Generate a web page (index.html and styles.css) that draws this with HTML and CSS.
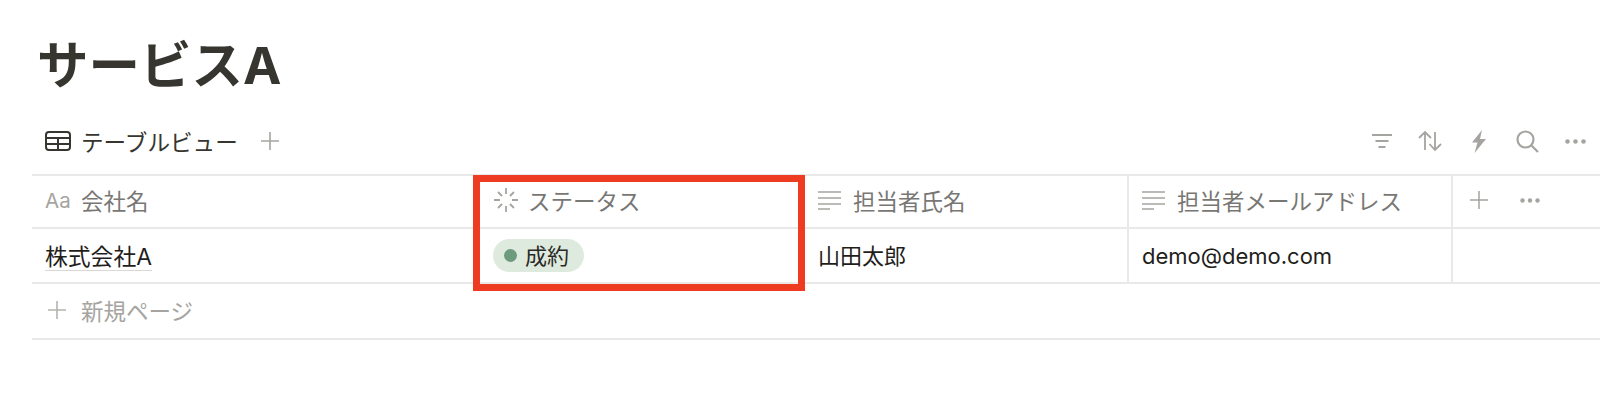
FILE: index.html
```html
<!DOCTYPE html>
<html lang="ja">
<head>
  <meta charset="UTF-8">
  <title>サービスA</title>
  <link rel="stylesheet" href="styles.css">
</head>
<body>
  <div class="page">
    <h1 class="title">サービスA</h1>

    <div class="toolbar">
      <div class="view-tab">
        <svg class="tab-icon" width="26" height="22" viewBox="0 0 26 22" fill="none" stroke="#37352f" stroke-width="2">
          <rect x="1" y="2" width="24" height="18" rx="3"/>
          <path d="M1 8h24M1 14h24M13 8v12"/>
        </svg>
        <span>テーブルビュー</span>
        <svg class="add-view" width="20" height="20" viewBox="0 0 20 20" stroke="#a5a4a0" stroke-width="1.6"><path d="M10 1v18M1 10h18"/></svg>
      </div>
      <div class="tools">
        <svg width="20" height="16" viewBox="0 0 20 16" fill="none" stroke="#a5a4a0" stroke-width="2"><path d="M0 2h20M3.500 8h13M6.500 14h7"/></svg>
        <svg width="24" height="22" viewBox="0 0 24 22" fill="none" stroke="#a5a4a0" stroke-width="1.800"><path d="M7 20V2M1 8l6-6 6 6M17 2v18M11.500 14l5.500 6 6-6"/></svg>
        <svg class="bolt" width="16" height="23" viewBox="0 0 16 23" fill="#a5a4a0"><path d="M11 0 1 12.500h5.500L3.500 23 15 9H9z"/></svg>
        <svg width="23" height="23" viewBox="0 0 23 23" fill="none" stroke="#a5a4a0" stroke-width="2.200"><circle cx="9.500" cy="9.500" r="8"/><path d="M15 15l7 7"/></svg>
        <svg width="21" height="5" viewBox="0 0 21 5" fill="#a5a4a0"><circle cx="2.500" cy="2.500" r="2.300"/><circle cx="10.500" cy="2.500" r="2.300"/><circle cx="18.500" cy="2.500" r="2.300"/></svg>
      </div>
    </div>

    <div class="table">
      <div class="row head">
        <div class="cell col-name"><span class="aa">Aa</span>会社名</div>
        <div class="cell col-status">
          <svg width="26" height="26" viewBox="0 0 26 26" stroke="#a5a4a0" stroke-width="1.800"><path d="M13 1v6M13 19v6M1 13h6M19 13h6M5 5l4 4M17 17l4 4M5 21l4-4M17 9l4-4"/></svg>
          ステータス
        </div>
        <div class="cell col-person">
          <svg class="lines" width="23" height="20" viewBox="0 0 23 20" stroke="#a5a4a0" stroke-width="1.600"><path d="M0 2h23M0 8h23M0 14h23M0 19h12"/></svg>
          担当者氏名
        </div>
        <div class="cell col-mail">
          <svg class="lines" width="23" height="20" viewBox="0 0 23 20" stroke="#a5a4a0" stroke-width="1.600"><path d="M0 2h23M0 8h23M0 14h23M0 19h12"/></svg>
          担当者メールアドレス
        </div>
        <div class="cell col-add">
          <svg width="18" height="18" viewBox="0 0 18 18" stroke="#a5a4a0" stroke-width="1.500"><path d="M9 0v18M0 9h18"/></svg>
          <svg class="more" width="20" height="5" viewBox="0 0 20 5" fill="#a5a4a0"><circle cx="2.500" cy="2.500" r="2.200"/><circle cx="10" cy="2.500" r="2.200"/><circle cx="17.500" cy="2.500" r="2.200"/></svg>
        </div>
      </div>
      <div class="row body">
        <div class="cell col-name"><span class="page-link">株式会社A</span></div>
        <div class="cell col-status"><span class="tag"><i class="dot"></i><span class="tag-text">成約</span></span></div>
        <div class="cell col-person"><span class="person">山田太郎</span></div>
        <div class="cell col-mail">demo@demo.com</div>
        <div class="cell col-add"></div>
      </div>
      <div class="new-page">
        <svg width="20" height="20" viewBox="0 0 20 20" stroke="#b4b3af" stroke-width="1.600"><path d="M10 1v18M1 10h18"/></svg>
        新規ページ
      </div>
      <div class="highlight"></div>
    </div>
  </div>
</body>
</html>
```

FILE: styles.css
```css
* {
  box-sizing: border-box;
}
body {
  margin: 0;
  background-color: #fff;
  font-family: "Inter", "Noto Sans CJK JP", sans-serif;
  color: #37352f;
}

.page {
  padding: 31px 0 0 32px;
}

.title {
  margin: 0 0 0 5px;
  font-size: 51.5px;
  line-height: 68px;
  font-weight: 700;
  color: #37352f;
}

.toolbar {
  display: flex;
  justify-content: space-between;
  align-items: center;
  height: 44px;
  margin-top: 20px;
  padding: 0 14px 0 13px;
}
.view-tab {
  display: flex;
  align-items: center;
  font-size: 22.6px;
  color: #37352f;
}
.tab-icon {
  margin-right: 10px;
}
.add-view {
  margin-left: 22px;
}
.tools {
  display: flex;
  align-items: center;
  gap: 26px;
}
.bolt {
  margin: 0 3px;
}

.table {
  position: relative;
  margin-top: 11px;
  border-top: 2px solid #e9e9e7;
}
.row {
  display: flex;
  border-bottom: 2px solid #e9e9e7;
}
.row.head {
  height: 53px;
  color: #787774;
  font-size: 22.5px;
}
.row.body {
  height: 55px;
  color: #1f1e1b;
  font-size: 22px;
}
.row.head .cell {
  padding-bottom: 3px;
}
.cell {
  display: flex;
  align-items: center;
  padding-left: 13px;
  border-right: 2px solid #e9e9e7;
}
.col-name {
  width: 448px;
  border-right: none;
}
.col-status {
  width: 326px;
  padding-left: 13px;
  gap: 9px;
  border-right: none;
}
.col-person {
  width: 323px;
  padding-left: 12px;
}
.col-mail {
  width: 324px;
  padding-left: 13px;
}
.col-add {
  flex: 1;
  border-right: none;
  padding-left: 17px;
}
.lines {
  margin-right: 12px;
}
.more {
  margin-left: 32px;
}
.aa {
  width: 36px;
  font-size: 20.500px;
  color: #a5a4a0;
}
.page-link {
  margin-top: 3px;
  border-bottom: 1.5px solid #d9d8d5;
  line-height: 26px;
  font-size: 22.8px;
  color: #1f1e1b;
}
.person {
  margin-bottom: 4px;
}

.tag {
  display: inline-flex;
  align-items: center;
  height: 33px;
  padding: 0 15px 0 11px;
  border-radius: 17px;
  background-color: #dfeadf;
  color: #2b2a26;
  font-size: 22px;
}
.tag-text {
  margin-bottom: 4px;
}
.dot {
  width: 13px;
  height: 13px;
  margin-right: 8px;
  border-radius: 50%;
  background-color: #6c9b7d;
}

.new-page {
  display: flex;
  align-items: center;
  gap: 14px;
  height: 56px;
  padding-left: 15px;
  padding-bottom: 3px;
  border-bottom: 2px solid #e9e9e7;
  font-size: 22.500px;
  color: #a5a4a0;
}

.highlight {
  position: absolute;
  left: 441px;
  top: -1px;
  width: 332px;
  height: 116px;
  border: 7px solid #ee3c22;
}
```
